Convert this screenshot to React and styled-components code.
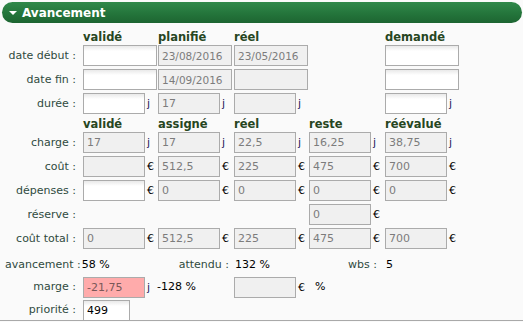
import React from "react";
import styled, { createGlobalStyle } from "styled-components";

const GlobalStyle = createGlobalStyle`
  html, body {
    margin: 0;
    padding: 0;
    background: #fafafa;
  }
  body {
    font-family: "DejaVu Sans", Verdana, sans-serif;
    font-size: 11px;
    color: #000;
  }
`;

const Panel = styled.div`
  width: 523px;
  height: 321px;
  box-sizing: border-box;
  padding: 2px 1px 0 2px;
  border-bottom: 1px solid #a9a9a9;
  background: #fafafa;
  overflow: hidden;
`;

const TitleBar = styled.div`
  height: 21px;
  border-radius: 11px;
  background: linear-gradient(#30894a, #23733a 60%, #1d6531);
  display: flex;
  align-items: center;
  gap: 5px;
  padding-left: 7px;
  color: #fff;
  font-weight: bold;
  font-size: 12px;
`;

const Caret = styled.span`
  width: 0;
  height: 0;
  border-left: 4px solid transparent;
  border-right: 4px solid transparent;
  border-top: 4px solid #fff;
  margin-top: 1px;
`;

const Form = styled.div`
  margin-top: 6px;
`;

const Row = styled.div`
  display: grid;
  grid-template-columns: 78px 75px 76px 75px 76px 76px;
  height: ${(p) => p.$h || 24}px;
  align-items: ${(p) => p.$align || "start"};
`;

const HeadRow = styled(Row)`
  align-items: end;
  padding-bottom: 1px;
  box-sizing: border-box;
`;

const ColHead = styled.div`
  padding-left: 3px;
  font-weight: bold;
  font-size: 11.5px;
  line-height: 13px;
  color: #27461f;
`;

const Label = styled.div`
  text-align: right;
  padding-right: 4px;
  color: #2f4a40;
  line-height: ${(p) => p.$lh || 21}px;
  white-space: nowrap;
`;

const WideLabel = styled.div`
  padding-left: 3px;
  color: #2f4a40;
  white-space: nowrap;
  line-height: 14px;
`;

const Cell = styled.div`
  display: flex;
  align-items: center;
  padding-left: 3px;
  line-height: 14px;
  white-space: nowrap;
`;

const Value = styled.span`
  color: #000;
  margin-left: ${(p) => p.$ml || 0}px;
`;

const Field = styled.input`
  box-sizing: border-box;
  width: ${(p) => p.$w || 62}px;
  height: ${(p) => p.$h || 21}px;
  margin: 0;
  padding: 0 3px;
  border: 1px solid #ababab;
  border-radius: 0;
  font-family: "DejaVu Sans", Verdana, sans-serif;
  font-size: ${(p) => (p.$date ? 10.5 : 11)}px;
  color: ${(p) => (p.$tone === "alert" ? "#7a5858" : p.readOnly ? "#7c7c7c" : "#000")};
  background: ${(p) =>
    p.$tone === "alert"
      ? "#ffabab"
      : p.readOnly
      ? "#f0f0f0"
      : "linear-gradient(#e9e9e9, #ffffff 5px)"};
  outline: none;
`;

const Unit = styled.span`
  margin-left: 2px;
  color: ${(p) => (p.$kind === "j" ? "#24185a" : "#000")};
  font-size: 11px;
`;

function Num({ value, unit, locked = true, tone, w }) {
  return (
    <Cell>
      <Field readOnly={locked} defaultValue={value} $tone={tone} $w={w} />
      {unit && <Unit $kind={unit === "j" ? "j" : "e"}>{unit}</Unit>}
    </Cell>
  );
}

function DateField({ value, locked }) {
  return (
    <Cell>
      <Field readOnly={locked} defaultValue={value} $w={74} $date />
    </Cell>
  );
}

const Empty = styled.div``;

export default function App() {
  return (
    <>
      <GlobalStyle />
      <Panel>
        <TitleBar>
          <Caret />
          Avancement
        </TitleBar>
        <Form>
          <HeadRow $h={16}>
            <Empty />
            <ColHead>validé</ColHead>
            <ColHead>planifié</ColHead>
            <ColHead>réel</ColHead>
            <Empty />
            <ColHead>demandé</ColHead>
          </HeadRow>
          <Row>
            <Label>date début :</Label>
            <DateField />
            <DateField locked value="23/08/2016" />
            <DateField locked value="23/05/2016" />
            <Empty />
            <DateField />
          </Row>
          <Row>
            <Label>date fin :</Label>
            <DateField />
            <DateField locked value="14/09/2016" />
            <DateField locked />
            <Empty />
            <DateField />
          </Row>
          <Row>
            <Label>durée :</Label>
            <Num locked={false} unit="j" />
            <Num value="17" unit="j" />
            <Num unit="j" />
            <Empty />
            <Num locked={false} unit="j" />
          </Row>
          <HeadRow $h={15}>
            <Empty />
            <ColHead>validé</ColHead>
            <ColHead>assigné</ColHead>
            <ColHead>réel</ColHead>
            <ColHead>reste</ColHead>
            <ColHead>réévalué</ColHead>
          </HeadRow>
          <Row>
            <Label>charge :</Label>
            <Num value="17" unit="j" />
            <Num value="17" unit="j" />
            <Num value="22,5" unit="j" />
            <Num value="16,25" unit="j" />
            <Num value="38,75" unit="j" />
          </Row>
          <Row>
            <Label>coût :</Label>
            <Num unit="€" />
            <Num value="512,5" unit="€" />
            <Num value="225" unit="€" />
            <Num value="475" unit="€" />
            <Num value="700" unit="€" />
          </Row>
          <Row>
            <Label>dépenses :</Label>
            <Num locked={false} unit="€" />
            <Num value="0" unit="€" />
            <Num value="0" unit="€" />
            <Num value="0" unit="€" />
            <Num value="0" unit="€" />
          </Row>
          <Row>
            <Label>réserve :</Label>
            <Empty />
            <Empty />
            <Empty />
            <Num value="0" unit="€" />
            <Empty />
          </Row>
          <Row>
            <Label>coût total :</Label>
            <Num value="0" unit="€" />
            <Num value="512,5" unit="€" />
            <Num value="225" unit="€" />
            <Num value="475" unit="€" />
            <Num value="700" unit="€" />
          </Row>
          <Row $h={25} $align="center">
            <WideLabel style={{ gridColumn: "1 / span 2" }}>
              avancement :<Value $ml={1}>58 %</Value>
            </WideLabel>
            <Label $lh={14} style={{ gridColumn: 3, paddingRight: 2 }}>
              attendu :
            </Label>
            <Cell style={{ gridColumn: 4 }}>
              <Value $ml={1}>132 %</Value>
            </Cell>
            <Label $lh={14} style={{ gridColumn: 5, paddingRight: 5 }}>
              wbs :
            </Label>
            <Cell style={{ gridColumn: 6 }}>
              <Value $ml={1}>5</Value>
            </Cell>
          </Row>
          <Row $h={23}>
            <Label $lh={20}>marge :</Label>
            <Num value="-21,75" unit="j" tone="alert" />
            <Cell>
              <Value style={{ lineHeight: "20px" }} $ml={-1}>-128 %</Value>
            </Cell>
            <Num unit="€" />
            <Cell>
              <Value style={{ lineHeight: "20px" }} $ml={6}>%</Value>
            </Cell>
            <Empty />
          </Row>
          <Row $h={20}>
            <Label $lh={20}>priorité :</Label>
            <Num locked={false} value="499" w={47} />
          </Row>
        </Form>
      </Panel>
    </>
  );
}
